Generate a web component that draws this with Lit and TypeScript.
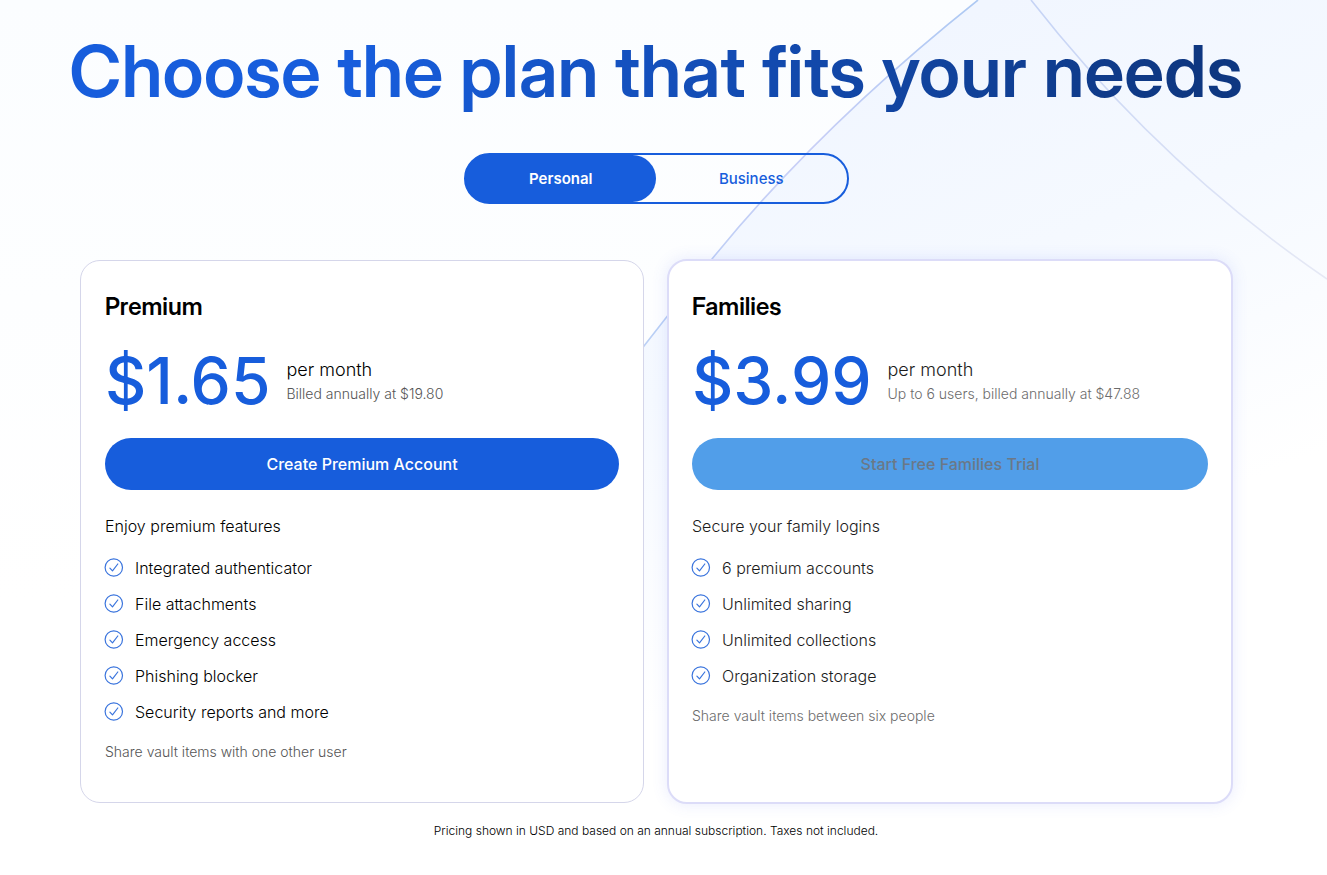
import { LitElement, html, css, svg } from "lit";
import { customElement, property, state } from "lit/decorators.js";
import { classMap } from "lit/directives/class-map.js";

interface Plan {
  name: string;
  price: string;
  billing: string;
  action: string;
  intro: string;
  features: string[];
  note: string;
  active: boolean;
}

const PLANS: Plan[] = [
  {
    name: "Premium",
    price: "$1.65",
    billing: "Billed annually at $19.80",
    action: "Create Premium Account",
    intro: "Enjoy premium features",
    features: [
      "Integrated authenticator",
      "File attachments",
      "Emergency access",
      "Phishing blocker",
      "Security reports and more",
    ],
    note: "Share vault items with one other user",
    active: false,
  },
  {
    name: "Families",
    price: "$3.99",
    billing: "Up to 6 users, billed annually at $47.88",
    action: "Start Free Families Trial",
    intro: "Secure your family logins",
    features: [
      "6 premium accounts",
      "Unlimited sharing",
      "Unlimited collections",
      "Organization storage",
    ],
    note: "Share vault items between six people",
    active: true,
  },
];

@customElement("plan-card")
export class PlanCard extends LitElement {
  @property({ attribute: false }) plan!: Plan;

  static styles = css`
    :host {
      display: grid;
    }
    .card {
      box-sizing: border-box;
      padding: 28px 24px;
      border: 1px solid #d5d6ea;
      border-radius: 20px;
      background: #fff;
      color: #000;
    }
    .card.active {
      margin: -1px;
      padding: 28px 23px;
      border: 2px solid #dcdcf8;
      box-shadow: 0 0 16px rgba(80, 100, 240, 0.13);
      color: #1c1c1c;
    }
    .name {
      margin: 0;
      font-family: "Inter Display", Inter, sans-serif;
      font-variation-settings: "opsz" 24;
      font-size: 24px;
      line-height: 36px;
      font-weight: 600;
      color: #000;
    }
    .pricing {
      display: flex;
      align-items: center;
      gap: 16px;
      margin-top: 16px;
    }
    .price {
      font-size: 64px;
      line-height: 80px;
      font-weight: 500;
      color: #175ddc;
    }
    .period {
      font-size: 18px;
      line-height: 26px;
      font-weight: 300;
    }
    .billing {
      font-size: 14px;
      line-height: 22px;
      font-weight: 300;
      color: #555;
    }
    .active .billing,
    .active .note {
      color: #6c6c6c;
    }
    .action {
      display: block;
      width: 100%;
      height: 52px;
      margin-top: 17px;
      padding: 0;
      border: 0;
      border-radius: 26px;
      background: #175ddc;
      color: #fff;
      font: 500 16px/24px Inter, sans-serif;
      cursor: pointer;
    }
    .active .action {
      background: #519ee9;
      color: #6b7887;
    }
    .intro {
      margin: 24px 0 0;
      font-size: 16px;
      line-height: 24px;
      font-weight: 300;
    }
    .features {
      display: grid;
      gap: 12px;
      margin: 18px 0 0;
      padding: 0;
      list-style: none;
      font-size: 16px;
      line-height: 24px;
      font-weight: 300;
    }
    .feature {
      display: flex;
      gap: 11px;
    }
    .check {
      width: 19px;
      height: 22px;
      flex: none;
      fill: none;
      stroke: #3a74dd;
      overflow: visible;
    }
    .note {
      margin: 16px 0 10px;
      font-size: 14px;
      line-height: 24px;
      font-weight: 300;
      color: #555;
    }
  `;

  render() {
    const p = this.plan;
    return html`
      <article class=${classMap({ card: true, active: p.active })}>
        <h2 class="name">${p.name}</h2>
        <div class="pricing">
          <div class="price">${p.price}</div>
          <div>
            <div class="period">per month</div>
            <div class="billing">${p.billing}</div>
          </div>
        </div>
        <button class="action" type="button">${p.action}</button>
        <p class="intro">${p.intro}</p>
        <ul class="features">
          ${p.features.map(
            (f) => html`<li class="feature">
              <svg class="check" viewBox="0 0 19 22" aria-hidden="true">
                ${svg`<circle cx="8.8" cy="11.5" r="8.7" stroke-width="1.2" />
                <path d="M4.9 12.2 7.5 14.9 12.8 8" stroke-width="1.2" stroke-linecap="round" stroke-linejoin="round" />`}
              </svg>
              <span>${f}</span>
            </li>`
          )}
        </ul>
        <p class="note">${p.note}</p>
      </article>
    `;
  }
}

@customElement("app-root")
export class AppRoot extends LitElement {
  @state() private audience = "Personal";

  static styles = css`
    :host {
      display: block;
      position: relative;
      box-sizing: border-box;
      min-height: 100vh;
      overflow: hidden;
      padding: 35px 95px 28px 80px;
      font-family: Inter, sans-serif;
      background: linear-gradient(180deg, #fbfdff 0, #fff 600px);
    }
    .backdrop {
      position: absolute;
      inset: 0;
      width: 100%;
      height: 875px;
    }
    .content {
      position: relative;
      display: flex;
      flex-direction: column;
      align-items: center;
    }
    .title {
      margin: 0 -20px;
      font-family: "Inter Display", Inter, sans-serif;
      font-variation-settings: "opsz" 32;
      font-size: 72px;
      line-height: 72px;
      padding-bottom: 12px;
      font-weight: 600;
      white-space: nowrap;
      background: linear-gradient(100deg, #175ddc 25%, #0e3781 95%);
      -webkit-background-clip: text;
      background-clip: text;
      color: transparent;
    }
    .toggle {
      display: grid;
      grid-template-columns: 1fr 1fr;
      box-sizing: border-box;
      width: 385px;
      margin-top: 34px;
      border: 2px solid #175ddc;
      border-radius: 26px;
      background: linear-gradient(90deg, #175ddc 24px, transparent 24px);
    }
    .option {
      height: 47px;
      padding: 0;
      border: 0;
      border-radius: 24px;
      background: none;
      color: #175ddc;
      font: 500 15px/24px Inter, sans-serif;
      cursor: pointer;
    }
    .option.selected {
      background: #175ddc;
      color: #fff;
      font-weight: 600;
    }
    .plans {
      display: grid;
      grid-template-columns: 1fr 1fr;
      gap: 24px;
      align-self: stretch;
      margin-top: 56px;
    }
    .footnote {
      margin: 18px 0 0;
      font-size: 12px;
      line-height: 20px;
      font-weight: 300;
      color: #000;
    }
  `;

  render() {
    return html`
      <svg class="backdrop" viewBox="0 0 1327 875" preserveAspectRatio="none" aria-hidden="true">
        <defs>
          <linearGradient id="fill" gradientUnits="userSpaceOnUse" x1="850" y1="60" x2="1050" y2="560">
            <stop offset="0" stop-color="#f1f6ff" />
            <stop offset="0.45" stop-color="#f5f9ff" />
            <stop offset="1" stop-color="#ffffff" />
          </linearGradient>
          <linearGradient id="edge" gradientUnits="userSpaceOnUse" x1="980" y1="0" x2="560" y2="500">
            <stop offset="0" stop-color="#adc9f3" />
            <stop offset="0.35" stop-color="#c9cff6" />
            <stop offset="0.7" stop-color="#b9cff5" />
            <stop offset="1" stop-color="#ccd9f8" />
          </linearGradient>
          <linearGradient id="arc" gradientUnits="userSpaceOnUse" x1="1030" y1="0" x2="1327" y2="280">
            <stop offset="0" stop-color="#c5d3f5" />
            <stop offset="1" stop-color="#e6e9f5" />
          </linearGradient>
        </defs>
        <path d="M978 0Q820 126 712 259L644 346Q560 460 500 600V875H1327V0Z" fill="url(#fill)" />
        <path d="M978 0Q820 126 712 259L644 346Q560 460 500 600" fill="none" stroke="url(#edge)" stroke-width="1.6" />
        <path d="M1031 0Q1160 165 1327 279" fill="none" stroke="url(#arc)" stroke-width="1.6" />
      </svg>
      <main class="content">
        <h1 class="title">Choose the plan that fits your needs</h1>
        <div class="toggle" role="group" aria-label="Plan type">
          ${["Personal", "Business"].map(
            (name) => html`<button
              type="button"
              class=${classMap({ option: true, selected: this.audience === name })}
              aria-pressed=${this.audience === name}
              @click=${() => (this.audience = name)}
            >${name}</button>`
          )}
        </div>
        <section class="plans">
          ${PLANS.map((p) => html`<plan-card .plan=${p}></plan-card>`)}
        </section>
        <p class="footnote">
          Pricing shown in USD and based on an annual subscription. Taxes not included.
        </p>
      </main>
    `;
  }
}
